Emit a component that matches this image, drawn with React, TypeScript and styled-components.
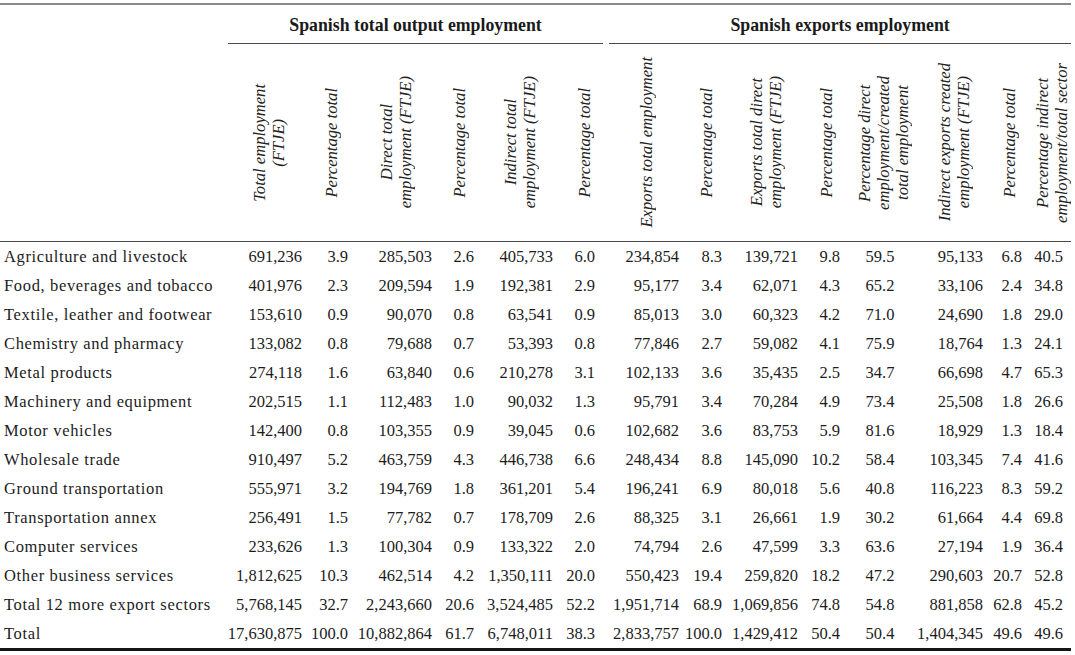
import React from "react";
import styled, { createGlobalStyle } from "styled-components";

const GlobalStyle = createGlobalStyle`
  html, body {
    margin: 0;
    padding: 0;
    background: #ffffff;
  }
  body {
    font-family: "Liberation Serif", "Times New Roman", serif;
    color: #1c1c1c;
  }
`;

type Column = { w: number; pr: number; center?: boolean; lines: string[] };

const columns: Column[] = [
  { w: 79, pr: 3, lines: ["Total employment", "(FTJE)"] },
  { w: 46, pr: 3, lines: ["Percentage total"] },
  { w: 84, pr: 3, lines: ["Direct total", "employment (FTJE)"] },
  { w: 42, pr: 3, lines: ["Percentage total"] },
  { w: 79, pr: 3, lines: ["Indirect total", "employment (FTJE)"] },
  { w: 50, pr: 11, lines: ["Percentage total"] },
  { w: 75, pr: 2, lines: ["Exports total employment"] },
  { w: 44, pr: 3, lines: ["Percentage total"] },
  { w: 76, pr: 3, lines: ["Exports total direct", "employment (FTJE)"] },
  { w: 44, pr: 5, lines: ["Percentage total"] },
  { w: 70, pr: 0, center: true, lines: ["Percentage direct", "employment/created", "total employment"] },
  { w: 71, pr: 3, lines: ["Indirect exports created", "employment (FTJE)"] },
  { w: 40, pr: 4, lines: ["Percentage total"] },
  { w: 45, pr: 8, lines: ["Percentage indirect", "employment/total sector"] },
];

const rows: [string, string[]][] = [
  ["Agriculture and livestock", ["691,236", "3.9", "285,503", "2.6", "405,733", "6.0", "234,854", "8.3", "139,721", "9.8", "59.5", "95,133", "6.8", "40.5"]],
  ["Food, beverages and tobacco", ["401,976", "2.3", "209,594", "1.9", "192,381", "2.9", "95,177", "3.4", "62,071", "4.3", "65.2", "33,106", "2.4", "34.8"]],
  ["Textile, leather and footwear", ["153,610", "0.9", "90,070", "0.8", "63,541", "0.9", "85,013", "3.0", "60,323", "4.2", "71.0", "24,690", "1.8", "29.0"]],
  ["Chemistry and pharmacy", ["133,082", "0.8", "79,688", "0.7", "53,393", "0.8", "77,846", "2.7", "59,082", "4.1", "75.9", "18,764", "1.3", "24.1"]],
  ["Metal products", ["274,118", "1.6", "63,840", "0.6", "210,278", "3.1", "102,133", "3.6", "35,435", "2.5", "34.7", "66,698", "4.7", "65.3"]],
  ["Machinery and equipment", ["202,515", "1.1", "112,483", "1.0", "90,032", "1.3", "95,791", "3.4", "70,284", "4.9", "73.4", "25,508", "1.8", "26.6"]],
  ["Motor vehicles", ["142,400", "0.8", "103,355", "0.9", "39,045", "0.6", "102,682", "3.6", "83,753", "5.9", "81.6", "18,929", "1.3", "18.4"]],
  ["Wholesale trade", ["910,497", "5.2", "463,759", "4.3", "446,738", "6.6", "248,434", "8.8", "145,090", "10.2", "58.4", "103,345", "7.4", "41.6"]],
  ["Ground transportation", ["555,971", "3.2", "194,769", "1.8", "361,201", "5.4", "196,241", "6.9", "80,018", "5.6", "40.8", "116,223", "8.3", "59.2"]],
  ["Transportation annex", ["256,491", "1.5", "77,782", "0.7", "178,709", "2.6", "88,325", "3.1", "26,661", "1.9", "30.2", "61,664", "4.4", "69.8"]],
  ["Computer services", ["233,626", "1.3", "100,304", "0.9", "133,322", "2.0", "74,794", "2.6", "47,599", "3.3", "63.6", "27,194", "1.9", "36.4"]],
  ["Other business services", ["1,812,625", "10.3", "462,514", "4.2", "1,350,111", "20.0", "550,423", "19.4", "259,820", "18.2", "47.2", "290,603", "20.7", "52.8"]],
  ["Total 12 more export sectors", ["5,768,145", "32.7", "2,243,660", "20.6", "3,524,485", "52.2", "1,951,714", "68.9", "1,069,856", "74.8", "54.8", "881,858", "62.8", "45.2"]],
  ["Total", ["17,630,875", "100.0", "10,882,864", "61.7", "6,748,011", "38.3", "2,833,757", "100.0", "1,429,412", "50.4", "50.4", "1,404,345", "49.6", "49.6"]],
];

const Page = styled.div`
  padding-top: 3px;
`;

const Table = styled.table`
  width: 1071px;
  table-layout: fixed;
  border-collapse: separate;
  border-spacing: 0;
  border-top: 2px solid #8a8a8a;
  border-bottom: 3px solid #151515;
`;

const Col = styled.col<{ $w: number }>`
  width: ${(p) => p.$w}px;
`;

const Corner = styled.th`
  padding: 0;
  border-bottom: 1px solid #4a4a4a;
`;

const GroupCell = styled.th`
  padding: 0;
  vertical-align: bottom;
`;

const GroupTitle = styled.div<{ $ml: number; $mr: number }>`
  height: 35px;
  padding-top: 3px;
  line-height: 35px;
  margin: 0 ${(p) => p.$mr}px 0 ${(p) => p.$ml}px;
  border-bottom: 1px solid #4a4a4a;
  font-size: 17.8px;
  font-weight: bold;
  text-align: center;
  white-space: nowrap;
  color: #1a1a1a;
`;

const RotCell = styled.th`
  padding: 0;
  font-weight: normal;
  border-bottom: 1px solid #4a4a4a;
`;

const RotWrap = styled.div`
  height: 197px;
  display: flex;
  align-items: center;
  justify-content: center;
  padding-left: 6px;
`;

const RotText = styled.div`
  writing-mode: vertical-rl;
  transform: rotate(180deg);
  white-space: nowrap;
  text-align: center;
  font-style: italic;
  font-size: 16.6px;
  line-height: 19px;
  color: #222;
`;

const LabelCell = styled.th`
  padding: 1px 0 0 4px;
  height: 28px;
  line-height: 28px;
  text-align: left;
  font-weight: normal;
  font-size: 16.5px;
  letter-spacing: 0.65px;
  white-space: nowrap;
`;

const NumCell = styled.td<{ $pr: number; $center?: boolean }>`
  padding: 1px ${(p) => p.$pr}px 0 0;
  height: 28px;
  line-height: 28px;
  font-size: 16.5px;
  text-align: ${(p) => (p.$center ? "center" : "right")};
  white-space: nowrap;
`;

export default function App() {
  return (
    <Page>
      <GlobalStyle />
      <Table>
        <colgroup>
          <Col $w={226} />
          {columns.map((c, i) => (
            <Col key={i} $w={c.w} />
          ))}
        </colgroup>
        <thead>
          <tr>
            <Corner rowSpan={2} />
            <GroupCell colSpan={6}>
              <GroupTitle $ml={2} $mr={3}>Spanish total output employment</GroupTitle>
            </GroupCell>
            <GroupCell colSpan={8}>
              <GroupTitle $ml={3} $mr={0}>Spanish exports employment</GroupTitle>
            </GroupCell>
          </tr>
          <tr>
            {columns.map((c, i) => (
              <RotCell key={i}>
                <RotWrap>
                  <RotText>
                    {c.lines.map((l, j) => (
                      <React.Fragment key={j}>
                        {j > 0 && <br />}
                        {l}
                      </React.Fragment>
                    ))}
                  </RotText>
                </RotWrap>
              </RotCell>
            ))}
          </tr>
        </thead>
        <tbody>
          {rows.map(([label, values]) => (
            <tr key={label}>
              <LabelCell scope="row">{label}</LabelCell>
              {values.map((v, i) => (
                <NumCell key={i} $pr={columns[i].pr} $center={columns[i].center}>
                  {v}
                </NumCell>
              ))}
            </tr>
          ))}
        </tbody>
      </Table>
    </Page>
  );
}
